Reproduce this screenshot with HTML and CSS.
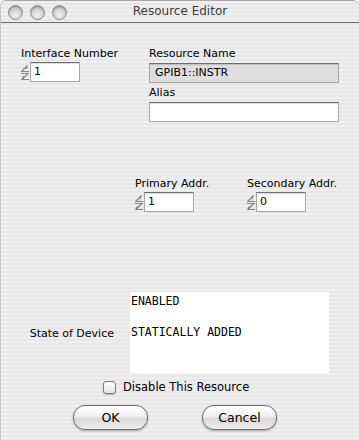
FILE: index.html
```html
<!DOCTYPE html>
<html lang="en">
<head>
    <meta charset="UTF-8">
    <title>Resource Editor</title>
    <link rel="stylesheet" href="styles.css">
</head>
<body>
    <div class="window">
        <div class="titlebar">
            <div class="lights">
                <span class="light"></span>
                <span class="light"></span>
                <span class="light"></span>
            </div>
            <div class="title">Resource Editor</div>
        </div>

        <div class="content">
            <div class="top-row">
                <div class="iface">
                    <div class="label">Interface Number</div>
                    <div class="spin-field">
                        <svg class="stepper" width="10" height="19" viewBox="0 0 10 19">
                            <path d="M1 8.5 H9 M2 8 L7.5 2.5 M7.5 2.5 L6 6" />
                            <path d="M1 10.5 H8 L2 16.5 H9 M2 16.5 L3.5 13" />
                        </svg>
                        <div class="field num">1</div>
                    </div>
                </div>
                <div class="resource">
                    <div class="label">Resource Name</div>
                    <div class="field wide readonly">GPIB1::INSTR</div>
                    <div class="label alias">Alias</div>
                    <div class="field wide"></div>
                </div>
            </div>

            <div class="addr-row">
                <div class="addr">
                    <div class="label">Primary Addr.</div>
                    <div class="spin-field">
                        <svg class="stepper" width="10" height="19" viewBox="0 0 10 19">
                            <path d="M1 8.5 H9 M2 8 L7.5 2.5 M7.5 2.5 L6 6" />
                            <path d="M1 10.5 H8 L2 16.5 H9 M2 16.5 L3.5 13" />
                        </svg>
                        <div class="field num">1</div>
                    </div>
                </div>
                <div class="addr">
                    <div class="label">Secondary Addr.</div>
                    <div class="spin-field">
                        <svg class="stepper" width="10" height="19" viewBox="0 0 10 19">
                            <path d="M1 8.5 H9 M2 8 L7.5 2.5 M7.5 2.5 L6 6" />
                            <path d="M1 10.5 H8 L2 16.5 H9 M2 16.5 L3.5 13" />
                        </svg>
                        <div class="field num">0</div>
                    </div>
                </div>
            </div>

            <div class="state-row">
                <div class="state-label">State of Device</div>
                <div class="state-box">ENABLED<br><br>STATICALLY ADDED</div>
            </div>

            <div class="check-row">
                <span class="checkbox"></span>
                <span class="check-label">Disable This Resource</span>
            </div>

            <div class="button-row">
                <div class="button">OK</div>
                <div class="button">Cancel</div>
            </div>
        </div>
    </div>
</body>
</html>
```

FILE: styles.css
```css
body {
    margin: 0;
    background-color: #ffffff;
    font-family: "DejaVu Sans", Verdana, sans-serif;
    font-size: 11px;
    color: #000;
}
.window {
    width: 359px;
    height: 440px;
    box-sizing: border-box;
    border-top: 1px solid #a8a8a8;
    border-left: 1px solid #c4c4c4;
    border-radius: 6px 6px 0 0;
    overflow: hidden;
    background: repeating-linear-gradient(#efefef 0 2px, #e7e7e7 2px 4px);
}
.titlebar {
    position: relative;
    height: 21px;
    border-bottom: 1px solid #6e6e6e;
}
.lights {
    display: flex;
    gap: 7px;
    padding: 4px 0 0 7px;
}
.light {
    width: 13px;
    height: 13px;
    border-radius: 50%;
    border: 1px solid #8c8c8c;
    background: radial-gradient(circle at 50% 70%, #f4f4f4 0, #d6d6d6 45%, #a9a9a9 100%);
    box-shadow: inset 0 1px 1px rgba(0,0,0,0.25);
}
.title {
    position: absolute;
    top: 3px;
    left: 0;
    right: 0;
    text-align: center;
    font-size: 12px;
    color: #3c3c3c;
}
.content {
    padding-top: 24px;
}
.label {
    line-height: 14px;
    white-space: nowrap;
}
.top-row {
    display: flex;
}
.iface {
    margin-left: 19px;
    width: 129px;
}
.iface .label {
    padding-left: 1px;
}
.resource {
    width: 190px;
}
.spin-field {
    display: flex;
    align-items: center;
    margin-top: 1px;
}
.stepper {
    flex: none;
}
.stepper path {
    fill: none;
    stroke: #858585;
    stroke-width: 1.1;
}
.field {
    height: 20px;
    box-sizing: border-box;
    border: 1px solid #a6a6a6;
    border-top-color: #6f6f6f;
    background: #fff;
    box-shadow: inset 0 1px 1px rgba(0,0,0,0.15);
    line-height: 18px;
    padding-left: 5px;
}
.num {
    width: 50px;
    padding-left: 3px;
}
.wide {
    width: 190px;
    margin-top: 2px;
}
.readonly {
    background: #dedede;
}
.alias {
    margin-top: 3px;
}
.addr-row {
    display: flex;
    margin-top: 55px;
    padding-left: 134px;
}
.addr {
    width: 114px;
}
.addr .spin-field {
    margin-left: -1px;
}
.state-row {
    display: flex;
    align-items: center;
    margin-top: 80px;
}
.state-label {
    width: 113px;
    text-align: right;
    line-height: 14px;
    padding-top: 3px;
}
.state-box {
    margin-left: 16px;
    width: 199px;
    height: 81px;
    box-sizing: border-box;
    background: #fff;
    padding: 2px 1px;
    font-family: "DejaVu Sans Mono", monospace;
    font-size: 11.5px;
    line-height: 15.5px;
}
.check-row {
    display: flex;
    align-items: center;
    gap: 7px;
    margin-top: 7px;
    padding-left: 102px;
    font-size: 11.5px;
    line-height: 14px;
}
.checkbox {
    width: 11px;
    height: 11px;
    border: 1px solid #7a7a7a;
    border-radius: 3px;
    background: linear-gradient(#fdfdfd, #e4e4e4);
    box-shadow: 0 1px 1px rgba(0,0,0,0.2);
}
.button-row {
    display: flex;
    gap: 54px;
    margin-top: 11px;
    padding-left: 72px;
}
.button {
    width: 75px;
    height: 25px;
    box-sizing: border-box;
    border: 1px solid #6b6b6b;
    border-radius: 12px;
    background: linear-gradient(#ffffff 0%, #f0f0f0 45%, #d9d9d9 55%, #eeeeee 100%);
    box-shadow: 0 1px 2px rgba(0,0,0,0.3);
    text-align: center;
    line-height: 23px;
    font-size: 12.5px;
}
```
